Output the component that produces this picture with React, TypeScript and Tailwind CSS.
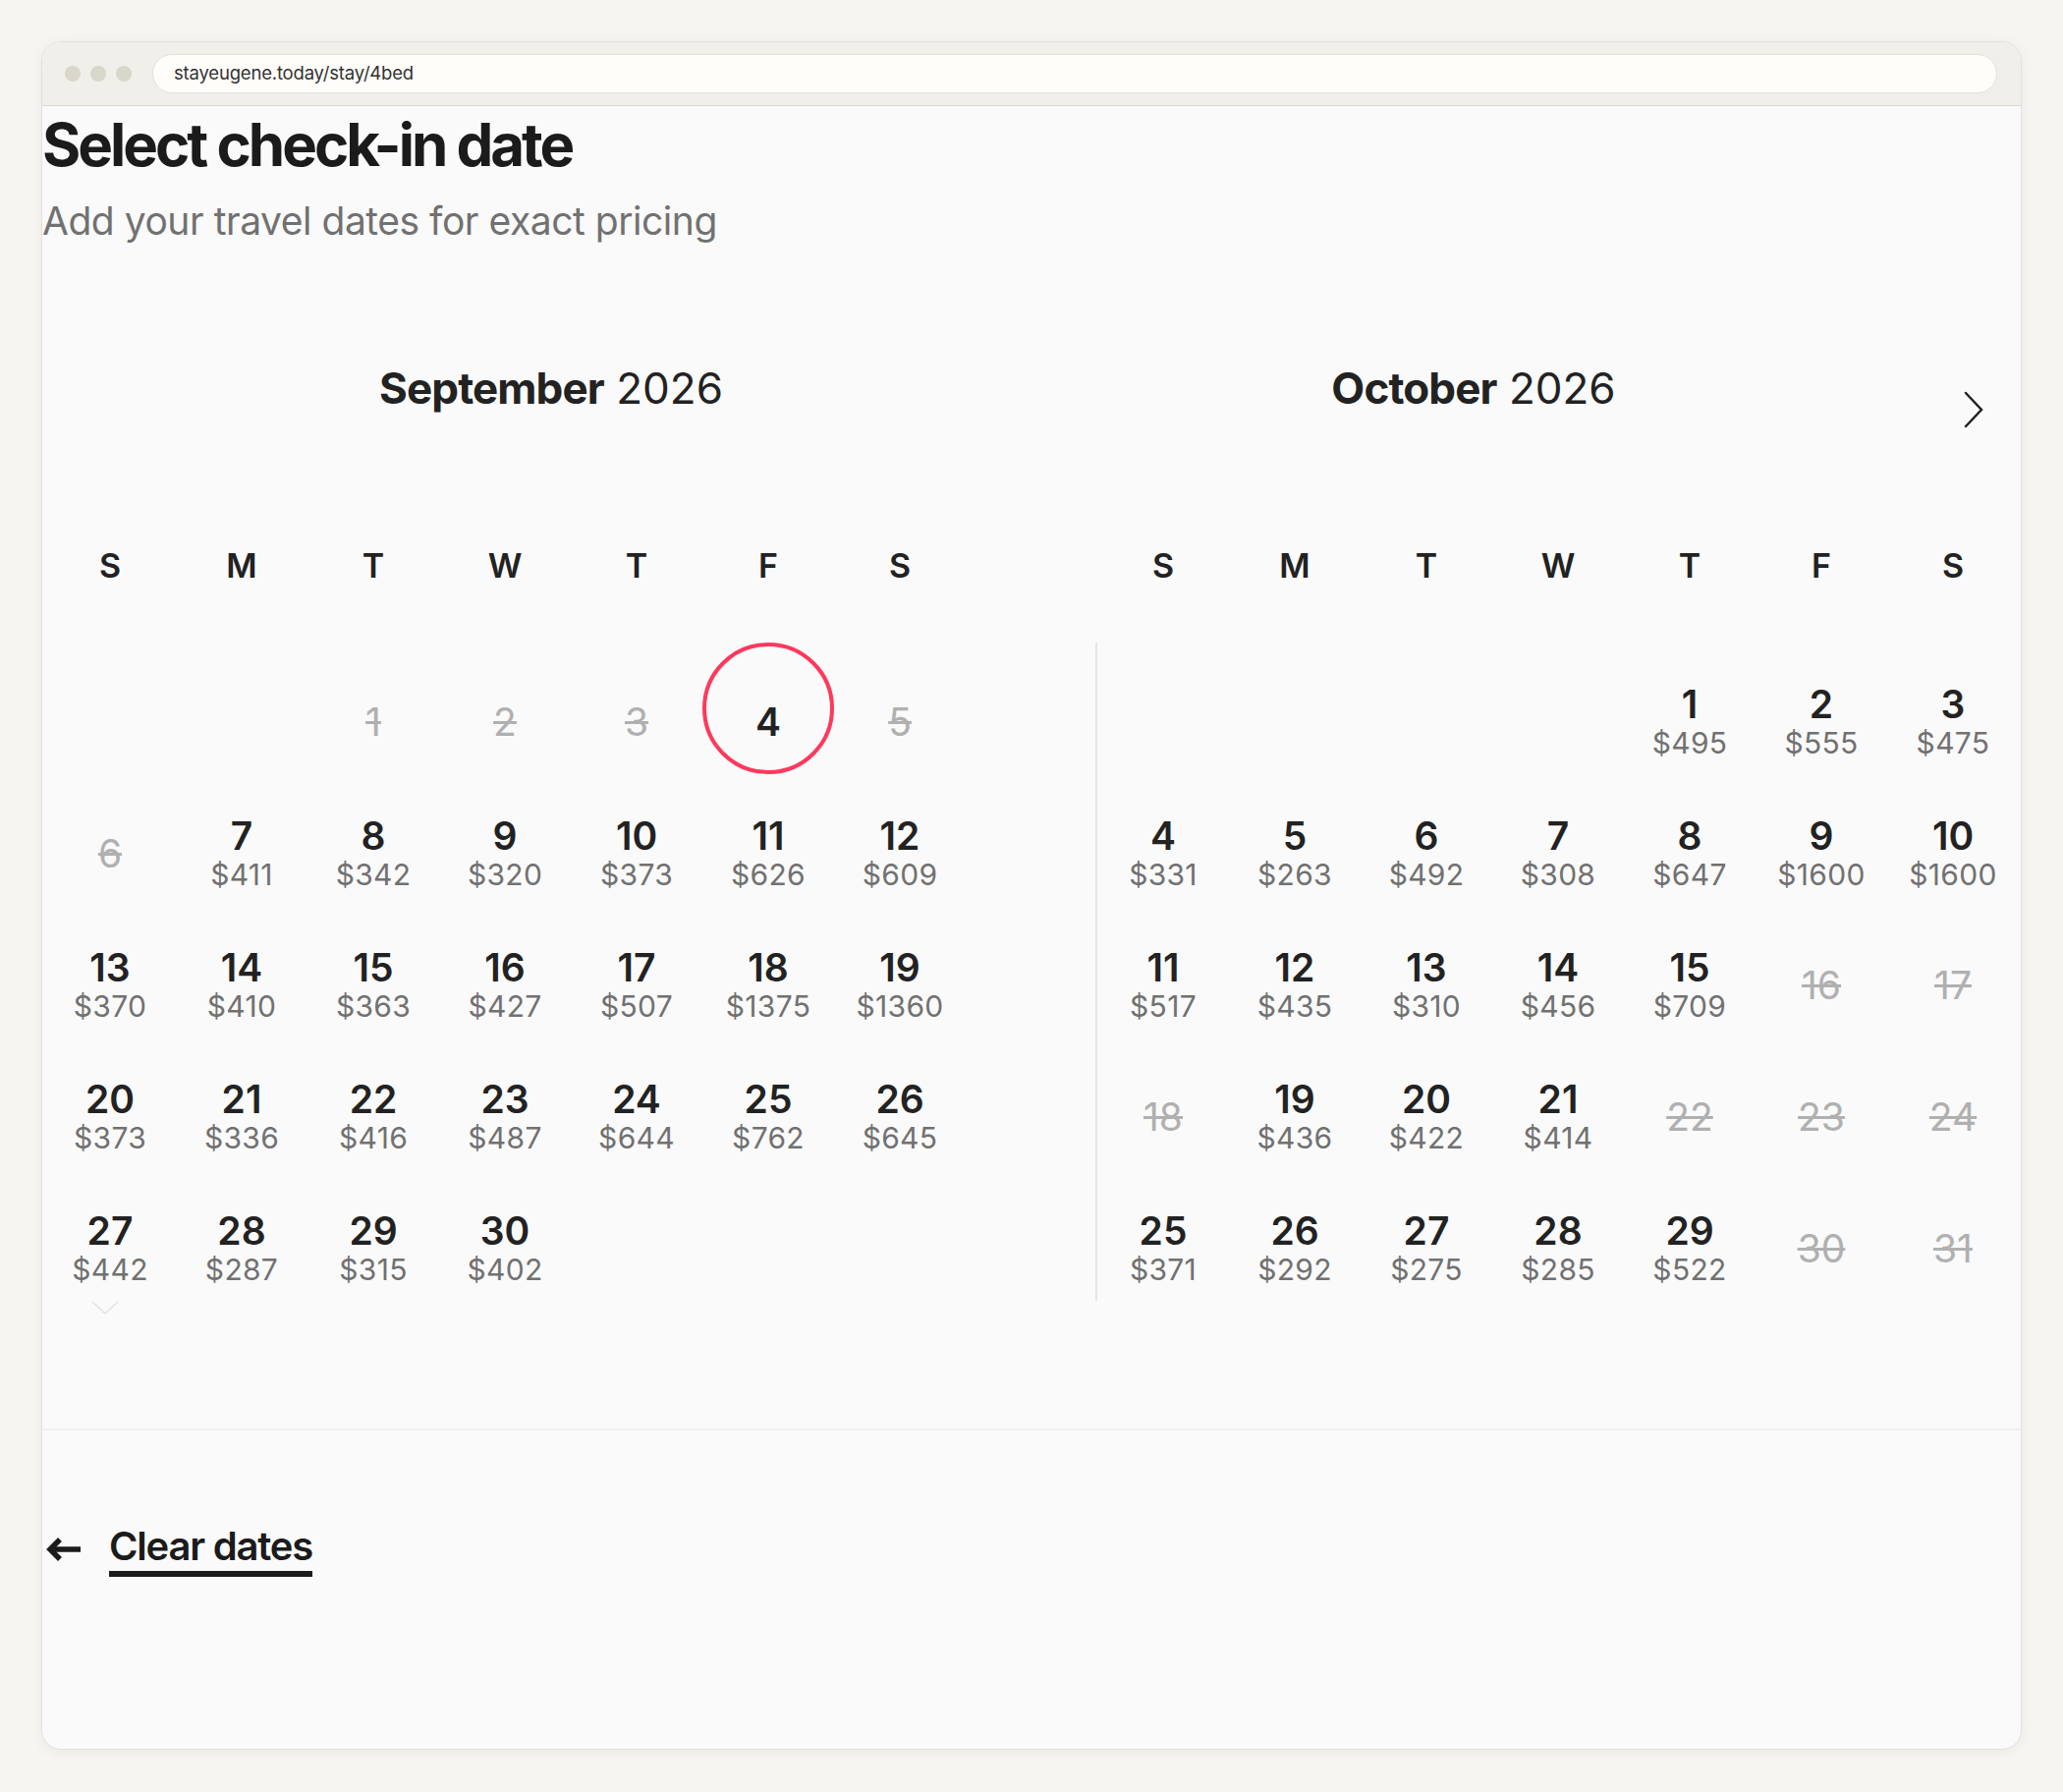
import { memo } from "react";

type Day = { d: number; price?: number; off?: boolean; sel?: boolean } | null;

const WEEKDAYS = ["S", "M", "T", "W", "T", "F", "S"];

const september: Day[] = [
  null,
  null,
  { d: 1, off: true },
  { d: 2, off: true },
  { d: 3, off: true },
  { d: 4, sel: true },
  { d: 5, off: true },
  { d: 6, off: true },
  { d: 7, price: 411 },
  { d: 8, price: 342 },
  { d: 9, price: 320 },
  { d: 10, price: 373 },
  { d: 11, price: 626 },
  { d: 12, price: 609 },
  { d: 13, price: 370 },
  { d: 14, price: 410 },
  { d: 15, price: 363 },
  { d: 16, price: 427 },
  { d: 17, price: 507 },
  { d: 18, price: 1375 },
  { d: 19, price: 1360 },
  { d: 20, price: 373 },
  { d: 21, price: 336 },
  { d: 22, price: 416 },
  { d: 23, price: 487 },
  { d: 24, price: 644 },
  { d: 25, price: 762 },
  { d: 26, price: 645 },
  { d: 27, price: 442 },
  { d: 28, price: 287 },
  { d: 29, price: 315 },
  { d: 30, price: 402 },
];

const october: Day[] = [
  null,
  null,
  null,
  null,
  { d: 1, price: 495 },
  { d: 2, price: 555 },
  { d: 3, price: 475 },
  { d: 4, price: 331 },
  { d: 5, price: 263 },
  { d: 6, price: 492 },
  { d: 7, price: 308 },
  { d: 8, price: 647 },
  { d: 9, price: 1600 },
  { d: 10, price: 1600 },
  { d: 11, price: 517 },
  { d: 12, price: 435 },
  { d: 13, price: 310 },
  { d: 14, price: 456 },
  { d: 15, price: 709 },
  { d: 16, off: true },
  { d: 17, off: true },
  { d: 18, off: true },
  { d: 19, price: 436 },
  { d: 20, price: 422 },
  { d: 21, price: 414 },
  { d: 22, off: true },
  { d: 23, off: true },
  { d: 24, off: true },
  { d: 25, price: 371 },
  { d: 26, price: 292 },
  { d: 27, price: 275 },
  { d: 28, price: 285 },
  { d: 29, price: 522 },
  { d: 30, off: true },
  { d: 31, off: true },
];

const DayCell = memo(({ day }: { day: Day }) => {
  if (!day) return <div className="h-[134px]" />;

  if (day.price) {
    return (
      <div className="flex h-[134px] flex-col items-center pt-[41px]">
        <span className="text-[39px] leading-[44px] font-semibold text-[#222222]">
          {day.d}
        </span>
        <span className="text-[30px] leading-[35px] tracking-[0.01em] text-[#717171]">
          ${day.price}
        </span>
      </div>
    );
  }

  if (day.sel) {
    return (
      <div className="relative flex h-[134px] flex-col items-center pt-[59px]">
        <div className="absolute inset-0 rounded-full border-[4px] border-[#ff385c]" />
        <span className="text-[39px] leading-[44px] font-semibold text-[#222222]">
          {day.d}
        </span>
      </div>
    );
  }

  return (
    <div className="flex h-[134px] flex-col items-center pt-[59px]">
      <span className="text-[39px] leading-[44px] text-[#b0b0b0] line-through decoration-[#b0b0b0]">
        {day.d}
      </span>
    </div>
  );
});
DayCell.displayName = "DayCell";

const Month = memo(({ days, divider }: { days: Day[]; divider?: boolean }) => {
  return (
    <div className="flex flex-col">
      <div
        className={`grid w-[938px] grid-cols-7 ${divider ? "ml-[2px]" : ""}`}
      >
        {WEEKDAYS.map((w, i) => (
          <div
            key={i}
            className="text-center text-[34px] leading-[40px] font-semibold text-[#222222]"
          >
            {w}
          </div>
        ))}
      </div>
      <div
        className={`mt-[58px] grid w-[938px] grid-cols-7 ${divider ? "box-content border-l-2 border-[#e6e6e6]" : ""}`}
      >
        {days.map((day, i) => (
          <DayCell key={i} day={day} />
        ))}
      </div>
    </div>
  );
});
Month.displayName = "Month";

export default function App() {
  return (
    <div className="h-[1824px] w-full bg-[#f6f5f1] p-[42px] font-['Inter',sans-serif]">
      <div className="flex h-[1739px] flex-col overflow-hidden rounded-[20px] border border-[#e3e1db] bg-[#fafafa] shadow-[0_2px_14px_rgba(0,0,0,0.05)]">
        {/* browser chrome */}
        <div className="flex h-[65px] shrink-0 items-center border-b border-[#dcd9d1] bg-[#f1efe9] pl-[23px] pr-[24px]">
          <div className="flex gap-[10px]">
            <span className="size-[16px] rounded-full bg-[#d9d6cb]" />
            <span className="size-[16px] rounded-full bg-[#d9d6cb]" />
            <span className="size-[16px] rounded-full bg-[#d9d6cb]" />
          </div>
          <div className="ml-[21px] flex h-[40px] flex-1 items-center rounded-full border border-[#e4e1d9] bg-[#fefdf9] pl-[21px]">
            <span className="text-[18.5px] tracking-[-0.01em] text-[#333333]">
              stayeugene.today/stay/4bed
            </span>
          </div>
        </div>

        {/* page */}
        <div className="flex flex-1 flex-col">
          <div>
            <h1 className="mt-[5px] text-[60px] leading-[68px] font-bold tracking-[-0.05em] text-[#1b1b1b]">
              Select check-in date
            </h1>
            <p className="mt-[20px] text-[39px] leading-[48px] tracking-[-0.012em] text-[#717171]">
              Add your travel dates for exact pricing
            </p>
          </div>

          <div className="mt-[120px] flex h-[52px] items-start pl-[50px]">
            <div className="w-[936px] text-center text-[44px] leading-[52px] text-[#222222]">
              <span className="font-bold tracking-[-0.02em]">September</span>{" "}
              <span className="font-normal">2026</span>
            </div>
            <div className="ml-[3px] w-[936px] text-center text-[44px] leading-[52px] text-[#222222]">
              <span className="font-bold tracking-[-0.02em]">October</span>{" "}
              <span className="font-normal">2026</span>
            </div>
            <svg
              className="mt-[29px] ml-[31px] shrink-0"
              width="20"
              height="38"
              viewBox="0 0 20 38"
              fill="none"
              stroke="#222222"
              strokeWidth="2.5"
              strokeLinecap="round"
              strokeLinejoin="miter"
            >
              <path d="M2 2 L18 19 L2 36" />
            </svg>
          </div>

          <div className="mt-[135px] flex pl-[2px]">
            <div className="flex flex-col">
              <Month days={september} />
              <svg
                className="ml-[48px]"
                width="28"
                height="14"
                viewBox="0 0 28 14"
                fill="none"
                stroke="#e3e3e3"
                strokeWidth="1.5"
              >
                <path d="M1 1 L14 13 L27 1" />
              </svg>
            </div>
            <div className="ml-[132px]">
              <Month days={october} divider />
            </div>
          </div>

          <div className="mt-[116px] border-t-2 border-[#f0f0f0]" />

          <div className="mt-[93px] flex items-center pl-[3px]">
            <svg
              width="37"
              height="26"
              viewBox="0 0 37 26"
              fill="none"
              stroke="#1b1b1b"
              strokeWidth="5.5"
            >
              <path d="M36 13 H5" />
              <path d="M15 3 L5 13 L15 23" />
            </svg>
            <span className="ml-[28px] border-b-[6px] border-[#1b1b1b] text-[40px] leading-[50px] font-semibold tracking-[-0.03em] text-[#1b1b1b]">
              Clear dates
            </span>
          </div>
        </div>
      </div>
    </div>
  );
}
